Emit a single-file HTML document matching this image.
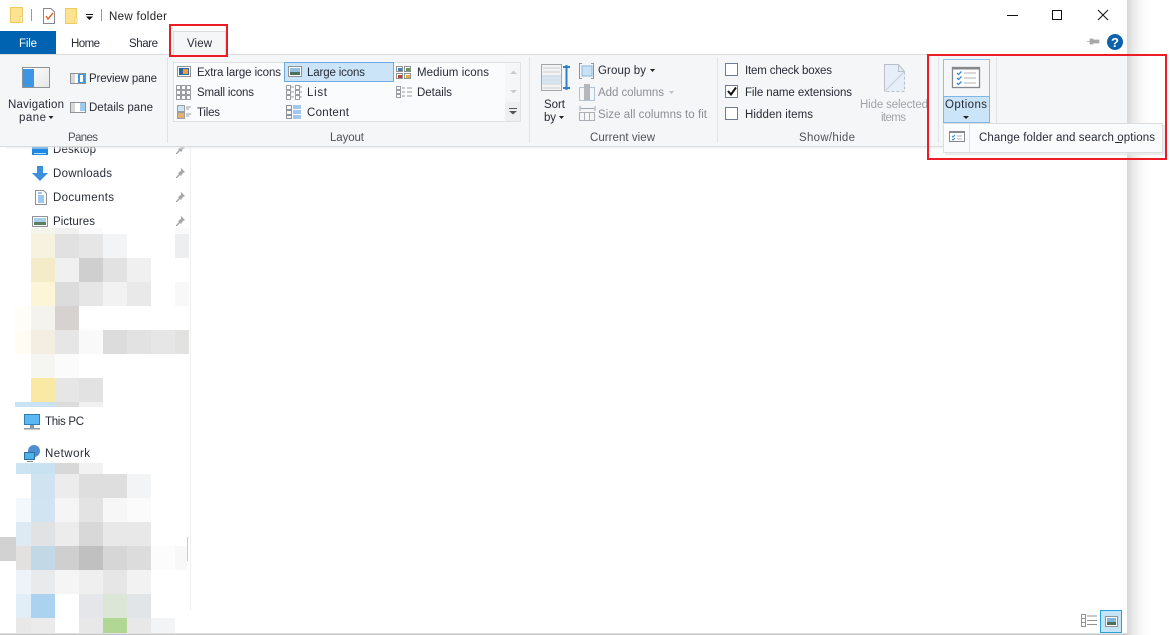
<!DOCTYPE html>
<html><head><meta charset="utf-8"><title>New folder</title>
<style>
html,body{margin:0;padding:0;background:#fff;width:1170px;height:635px;overflow:hidden}
svg{display:block}
text{font-family:"Liberation Sans",sans-serif;font-size:11.5px;fill:#262b36}
.g{fill:#8b8f94}
.h{fill:#a0a4a8}
</style></head><body>
<svg width="1170" height="635" viewBox="0 0 1170 635" xmlns="http://www.w3.org/2000/svg">
<defs>
<linearGradient id="sh" x1="0" x2="1" y1="0" y2="0"><stop offset="0" stop-color="#d6d6d6"/><stop offset=".25" stop-color="#e9e9e9"/><stop offset=".6" stop-color="#f8f8f8"/><stop offset="1" stop-color="#fff"/></linearGradient>
<linearGradient id="nv" x1="0" x2="1" y1="0" y2="1"><stop offset="0" stop-color="#fff"/><stop offset="1" stop-color="#e6e6e6"/></linearGradient>
</defs>
<rect width="1170" height="635" fill="#fff"/>
<rect x="1127" y="0" width="24" height="635" fill="url(#sh)"/>

<!-- sidebar -->
<rect x="190" y="147" width="1" height="463" fill="#f0f0f0"/>
<rect x="32" y="143" width="16" height="12" fill="#1e88e5"/><rect x="34" y="153" width="12" height="1" fill="#bfe0fa"/>
<text x="53" y="153" textLength="43">Desktop</text>
<path d="M37 166h6v7h5l-8 8-8-8h5z" fill="#3b8fdc"/>
<text x="53" y="177" textLength="59">Downloads</text>
<path d="M35.500 190.500h8l3 3v11h-11z" fill="#fff" stroke="#8d9297"/><path d="M38 193h4M38 196h6M38 198h6M38 200h6M38 202h6" stroke="#3e8fdc"/>
<text x="53" y="201" textLength="61">Documents</text>
<rect x="32.500" y="216.500" width="15" height="10" fill="#fff" stroke="#8f9398"/><rect x="34" y="218" width="12" height="4" fill="#a8cfe8"/><rect x="34" y="222" width="12" height="3" fill="#5c7f64"/>
<text x="53" y="225" textLength="42">Pictures</text>
<g fill="#a5a8ab">
<path d="M181 144l4 4-2 1-2 3-1-1-3 3-1 0 0-1 3-3-1-1 3-2z"/>
<path d="M181 168l4 4-2 1-2 3-1-1-3 3-1 0 0-1 3-3-1-1 3-2z"/>
<path d="M181 192l4 4-2 1-2 3-1-1-3 3-1 0 0-1 3-3-1-1 3-2z"/>
<path d="M181 216l4 4-2 1-2 3-1-1-3 3-1 0 0-1 3-3-1-1 3-2z"/>
</g>
<!-- pixelated upper -->
<g>
<rect x="31" y="228" width="24" height="6" fill="#f6f5ec"/><rect x="55" y="228" width="24" height="6" fill="#f0f0f0"/><rect x="79" y="228" width="24" height="6" fill="#fafafa"/><rect x="175" y="228" width="14" height="6" fill="#fafafa"/>
<rect x="31" y="234" width="24" height="24" fill="#f7f1df"/><rect x="55" y="234" width="24" height="24" fill="#e2e1e1"/><rect x="79" y="234" width="24" height="24" fill="#e6e6e6"/><rect x="103" y="234" width="24" height="24" fill="#f3f4f6"/><rect x="175" y="234" width="14" height="24" fill="#edeef0"/>
<rect x="31" y="258" width="24" height="24" fill="#f4ebc8"/><rect x="55" y="258" width="24" height="24" fill="#f0f0f0"/><rect x="79" y="258" width="24" height="24" fill="#cfcfcf"/><rect x="103" y="258" width="24" height="24" fill="#e2e2e2"/><rect x="127" y="258" width="24" height="24" fill="#f0f0f0"/>
<rect x="31" y="282" width="24" height="24" fill="#fdf5d8"/><rect x="55" y="282" width="24" height="24" fill="#dcdcdc"/><rect x="79" y="282" width="24" height="24" fill="#e6e6e6"/><rect x="103" y="282" width="24" height="24" fill="#f2f2f2"/><rect x="127" y="282" width="24" height="24" fill="#e9e9e9"/><rect x="175" y="282" width="14" height="24" fill="#f8f8f8"/>
<rect x="15" y="306" width="16" height="24" fill="#fffdf7"/><rect x="31" y="306" width="24" height="24" fill="#f4f3ee"/><rect x="55" y="306" width="24" height="24" fill="#d5d2d0"/>
<rect x="15" y="330" width="16" height="24" fill="#fffcf3"/><rect x="31" y="330" width="24" height="24" fill="#f3eee1"/><rect x="55" y="330" width="24" height="24" fill="#e6e6e6"/><rect x="79" y="330" width="24" height="24" fill="#f9f9f9"/><rect x="103" y="330" width="24" height="24" fill="#dcdcdc"/><rect x="127" y="330" width="24" height="24" fill="#e2e2e2"/><rect x="151" y="330" width="24" height="24" fill="#e6e6e6"/><rect x="175" y="330" width="14" height="24" fill="#e2e2e0"/>
<rect x="31" y="354" width="24" height="24" fill="#f5f5f2"/><rect x="55" y="354" width="24" height="24" fill="#fafbfa"/>
<rect x="31" y="378" width="24" height="24" fill="#fae8a5"/><rect x="55" y="378" width="24" height="24" fill="#e6e6e6"/><rect x="79" y="378" width="24" height="24" fill="#e2e2e2"/>
<rect x="15" y="402" width="40" height="5" fill="#c9e2f5"/><rect x="55" y="402" width="24" height="5" fill="#dcdcdc"/><rect x="79" y="402" width="24" height="5" fill="#f0f0f0"/>
</g>
<!-- This PC / Network -->
<rect x="24.500" y="414.500" width="15" height="10" fill="#5cb8f2" stroke="#2f7fb5"/><rect x="30" y="425" width="4" height="3" fill="#8a9aa5"/><rect x="24" y="428" width="16" height="1.500" fill="#8f9aa3"/>
<text x="45" y="425" textLength="39">This PC</text>
<circle cx="34" cy="451" r="6" fill="#4f8fd0"/><rect x="24.500" y="452.500" width="10" height="7" fill="#4fb0ea" stroke="#2d6f9f"/><rect x="27" y="461" width="6" height="1" fill="#7d8b96"/>
<text x="45" y="457" textLength="45">Network</text>
<!-- pixelated lower -->
<g>
<rect x="16" y="463" width="15" height="11" fill="#cde4f3"/><rect x="31" y="463" width="24" height="11" fill="#c9e2f1"/><rect x="55" y="463" width="24" height="11" fill="#d8d8d8"/><rect x="79" y="463" width="24" height="11" fill="#f2f2f2"/>
<rect x="31" y="474" width="24" height="24" fill="#cfe3f1"/><rect x="55" y="474" width="24" height="24" fill="#ececec"/><rect x="79" y="474" width="48" height="24" fill="#dedede"/><rect x="127" y="474" width="24" height="24" fill="#f3f4f6"/>
<rect x="16" y="498" width="15" height="24" fill="#f2f8fb"/><rect x="31" y="498" width="24" height="24" fill="#d0e4f2"/><rect x="55" y="498" width="24" height="24" fill="#f5f5f5"/><rect x="79" y="498" width="24" height="24" fill="#e3e3e3"/><rect x="103" y="498" width="24" height="24" fill="#f7f7f7"/><rect x="127" y="498" width="24" height="24" fill="#fbfbfb"/>
<rect x="16" y="522" width="15" height="24" fill="#dde9f3"/><rect x="31" y="522" width="24" height="24" fill="#e0e2e4"/><rect x="55" y="522" width="24" height="24" fill="#ececec"/><rect x="79" y="522" width="24" height="24" fill="#d8d8d8"/><rect x="103" y="522" width="48" height="24" fill="#e8e8e8"/>
<rect x="0" y="537" width="16" height="24" fill="#d2d2d2"/><rect x="187" y="537" width="1" height="24" fill="#cccccc"/>
<rect x="16" y="546" width="15" height="24" fill="#e2e1e0"/><rect x="31" y="546" width="24" height="24" fill="#c2d8e6"/><rect x="55" y="546" width="24" height="24" fill="#cfcfcf"/><rect x="79" y="546" width="24" height="24" fill="#c0c0c1"/><rect x="103" y="546" width="24" height="24" fill="#d6d6d6"/><rect x="127" y="546" width="24" height="24" fill="#dcdcdc"/><rect x="151" y="546" width="24" height="24" fill="#fcfcfc"/><rect x="175" y="546" width="12" height="24" fill="#f8f8f8"/>
<rect x="16" y="570" width="15" height="24" fill="#edf3f9"/><rect x="31" y="570" width="24" height="24" fill="#e9eaeb"/><rect x="55" y="570" width="24" height="24" fill="#f5f5f5"/><rect x="79" y="570" width="24" height="24" fill="#efefef"/><rect x="103" y="570" width="24" height="24" fill="#e6e6e6"/><rect x="127" y="570" width="24" height="24" fill="#f2f2f2"/>
<rect x="16" y="594" width="15" height="24" fill="#e1eef8"/><rect x="31" y="594" width="24" height="24" fill="#abd2ee"/><rect x="79" y="594" width="24" height="24" fill="#e4e6ea"/><rect x="103" y="594" width="24" height="24" fill="#dbe6d7"/><rect x="127" y="594" width="24" height="24" fill="#e1e5e8"/>
<rect x="16" y="618" width="15" height="15" fill="#e8e8e8"/><rect x="31" y="618" width="24" height="15" fill="#ebebeb"/><rect x="79" y="618" width="24" height="15" fill="#e8e8e8"/><rect x="103" y="618" width="24" height="15" fill="#b1d794"/><rect x="127" y="618" width="24" height="15" fill="#e8e8e8"/><rect x="151" y="618" width="24" height="15" fill="#f3f4f6"/>
</g>

<!-- bottom bar -->
<rect x="0" y="633.500" width="1127" height="1.500" fill="#c4c4c4"/>
<g fill="none" stroke="#8f9398"><rect x="1081.500" y="614.500" width="4" height="4"/><rect x="1081.500" y="618.500" width="4" height="4"/><rect x="1081.500" y="622.500" width="4" height="4"/></g>
<path d="M1087 616h10M1087 620.500h10M1087 624.500h10" stroke="#8f9398" stroke-width="1"/>
<rect x="1100.500" y="610.500" width="21" height="22" fill="#c6e4f8" stroke="#26a0da"/>
<rect x="1105.500" y="616.500" width="12" height="10" fill="#fff" stroke="#8f9398"/><rect x="1107" y="618" width="9" height="4" fill="#7fb6de"/><rect x="1107" y="622" width="9" height="3" fill="#4f6f5a"/>

<!-- title bar -->
<rect x="10.500" y="7.500" width="12" height="15" fill="#fde38f" stroke="#eccc63"/><rect x="20" y="16.500" width="2.500" height="6" fill="#fff3c8" stroke="#eccc63" stroke-width=".7"/>
<rect x="31" y="9" width="1" height="12" fill="#9a9a9a"/>
<path d="M43.500 8.500h7.500l3.500 3.500v11.500h-11z" fill="#fff" stroke="#85888c"/>
<path d="M46 16l2 3 5-6" fill="none" stroke="#e8632a" stroke-width="1.500"/>
<rect x="65.500" y="8.500" width="11" height="15" fill="#fde38f" stroke="#eccc63"/><rect x="75" y="17.500" width="2" height="6" fill="#fff3c8" stroke="#eccc63" stroke-width=".7"/>
<rect x="86" y="14" width="7" height="1" fill="#111"/><path d="M86 16.500h7l-3.500 3.500z" fill="#111"/>
<rect x="101" y="9" width="1" height="12" fill="#9a9a9a"/>
<text x="109" y="20" textLength="58" style="fill:#222">New folder</text>
<rect x="1007" y="15" width="11" height="1" fill="#111"/>
<rect x="1052.500" y="10.500" width="9" height="9" fill="none" stroke="#111"/>
<path d="M1098 10l10 10M1108 10l-10 10" stroke="#111" stroke-width="1"/>
<path d="M1087 41.500h3M1090 39h3v5h-3zM1093 40h6v3h-6z" fill="#a8a8a8" stroke="#a8a8a8" stroke-width=".7"/>
<circle cx="1115" cy="42" r="8" fill="#0d62ab"/>
<text x="1111" y="47" textLength="8" style="font-size:13px;font-weight:bold;fill:#fff">?</text>

<!-- tabs -->
<rect x="0" y="31" width="56" height="23" fill="#0063b1"/>
<text x="19" y="47" textLength="18" style="fill:#fff">File</text>
<text x="71" y="47" textLength="29">Home</text>
<text x="129" y="47" textLength="29">Share</text>

<!-- ribbon -->
<rect x="6" y="147" width="1121" height="2" fill="#ececec" opacity=".5"/>
<rect x="0" y="54" width="1127" height="93" fill="#f5f6f7"/>
<rect x="0" y="54" width="1127" height="1" fill="#dadbdc"/>
<rect x="0" y="146" width="1127" height="1" fill="#dadbdc"/>
<rect x="173.500" y="31.500" width="52" height="24" fill="#f5f6f7" stroke="#dadbdc"/><rect x="174" y="54" width="51" height="2" fill="#f5f6f7"/>
<text x="187" y="47" textLength="25">View</text>
<rect x="167" y="57" width="1" height="86" fill="#e2e3e4"/>
<rect x="529" y="57" width="1" height="86" fill="#e2e3e4"/>
<rect x="717" y="57" width="1" height="86" fill="#e2e3e4"/>
<rect x="938" y="57" width="1" height="86" fill="#e2e3e4"/>
<rect x="996" y="57" width="1" height="86" fill="#e2e3e4"/>

<!-- panes -->
<rect x="22.500" y="67.500" width="27" height="20" fill="url(#nv)" stroke="#8f9398"/>
<rect x="23" y="69" width="11" height="18" fill="#3d96e4"/>
<text x="8" y="108" textLength="56">Navigation</text>
<text x="19" y="121" textLength="27">pane</text>
<path d="M48.500 116h5l-2.500 3z" fill="#222"/>
<rect x="70.500" y="73.500" width="15" height="10" fill="#fff" stroke="#8f9398"/><rect x="71" y="74" width="4" height="9" fill="#d8d8d8"/><rect x="78" y="74" width="7" height="9" fill="#3f97e2"/><rect x="80" y="75" width="3" height="7" fill="#fff"/>
<text x="89" y="82" textLength="68">Preview pane</text>
<rect x="70.500" y="102.500" width="15" height="10" fill="#fff" stroke="#8f9398"/><rect x="71" y="103" width="4" height="9" fill="#d8d8d8"/><path d="M80 104h5M80 106h5M80 108h5M80 110h5" stroke="#3f97e2"/>
<text x="89" y="111" textLength="64">Details pane</text>
<text x="68" y="141" textLength="30" style="fill:#4f5358">Panes</text>

<!-- layout gallery -->
<rect x="173.500" y="62.500" width="347" height="59" fill="#fafbfd" stroke="#e0e1e3"/>
<rect x="505" y="63" width="15" height="58" fill="#f5f6f7"/>
<rect x="505" y="102" width="15" height="19" fill="#eeeff1"/>
<path d="M510 74h7l-3.500-3.500z" fill="#c9cbcf"/><path d="M510 90h7l-3.500 3.500z" fill="#c9cbcf"/>
<rect x="509" y="108" width="8" height="1" fill="#555"/><path d="M509 111h8l-4 3.500z" fill="#555"/>
<rect x="284.500" y="62.500" width="109" height="19" fill="#cce4f7" stroke="#6fa9e2"/>
<!-- gallery icons -->
<rect x="177.500" y="66.500" width="13" height="10" fill="#fff" stroke="#8f9398"/><rect x="179" y="68" width="10" height="7" fill="#30649a"/><rect x="183" y="69" width="5" height="5" fill="#e8a23a"/>
<g fill="#fff" stroke="#9a9da1"><rect x="176.500" y="85.500" width="4" height="4"/><rect x="181.500" y="85.500" width="4" height="4"/><rect x="186.500" y="85.500" width="4" height="4"/><rect x="176.500" y="90.500" width="4" height="4"/><rect x="181.500" y="90.500" width="4" height="4"/><rect x="186.500" y="90.500" width="4" height="4"/><rect x="176.500" y="95.500" width="4" height="4"/><rect x="181.500" y="95.500" width="4" height="4"/><rect x="186.500" y="95.500" width="4" height="4"/></g>
<rect x="177.500" y="105.500" width="7" height="6" fill="#cfe4f5" stroke="#9a9da1"/><rect x="177.500" y="112.500" width="7" height="6" fill="#e0b070" stroke="#9a9da1"/><path d="M186 107h5M186 109h3M186 114h5M186 116h3" stroke="#9a9da1"/>
<text x="197" y="76" textLength="84">Extra large icons</text>
<text x="197" y="96" textLength="57">Small icons</text>
<text x="197" y="116" textLength="23">Tiles</text>
<rect x="288.500" y="66.500" width="13" height="10" fill="#fff" stroke="#8f9398"/><rect x="290" y="68" width="10" height="4" fill="#8fc0e0"/><rect x="290" y="72" width="10" height="3" fill="#4f6f5a"/>
<g fill="#fff" stroke="#9a9da1"><rect x="286.500" y="85.500" width="4" height="4"/><rect x="286.500" y="90.500" width="4" height="4"/><rect x="286.500" y="95.500" width="4" height="4"/><rect x="295.500" y="85.500" width="4" height="4"/><rect x="295.500" y="90.500" width="4" height="4"/><rect x="295.500" y="95.500" width="4" height="4"/></g>
<path d="M291 87h3M291 92h3M291 97h3M300 87h2M300 92h2M300 97h2" stroke="#9a9da1"/>
<g fill="#fff" stroke="#8f9398"><rect x="286.500" y="105.500" width="5" height="4"/><rect x="286.500" y="110.500" width="5" height="4"/><rect x="286.500" y="115.500" width="5" height="3"/></g>
<path d="M293 106h8M293 108h8M293 111h8M293 113h8M293 116h8M293 118h8" stroke="#4a90e0"/>
<text x="307" y="76" textLength="58">Large icons</text>
<text x="307" y="96" textLength="20">List</text>
<text x="307" y="116" textLength="42">Content</text>
<g fill="#fff" stroke="#8f9398"><rect x="396.500" y="66.500" width="6" height="5"/><rect x="404.500" y="66.500" width="6" height="5"/><rect x="396.500" y="73.500" width="6" height="5"/><rect x="404.500" y="73.500" width="6" height="5"/></g>
<rect x="398" y="75" width="4" height="3" fill="#c8402a"/><rect x="406" y="75" width="4" height="3" fill="#e0b040"/><rect x="398" y="68" width="4" height="3" fill="#4a80b0"/><rect x="406" y="68" width="4" height="3" fill="#5a9a5a"/>
<g fill="#fff" stroke="#9a9da1"><rect x="396.500" y="86.500" width="4" height="3"/><rect x="396.500" y="90.500" width="4" height="3"/><rect x="396.500" y="94.500" width="4" height="3"/></g>
<path d="M402 88h3M407 88h5M402 92h3M407 92h5M402 96h3M407 96h5" stroke="#9a9da1"/>
<text x="417" y="76" textLength="72">Medium icons</text>
<text x="417" y="96" textLength="35">Details</text>
<text x="330" y="141" textLength="34" style="fill:#4f5358">Layout</text>

<!-- current view -->
<rect x="541.500" y="64.500" width="20" height="26" fill="#f3f3f3" stroke="#a3a6a9"/>
<path d="M543 68h17M543 72h17M543 76h17M543 80h17M543 84h17M543 88h17" stroke="#c9ced2"/><rect x="542" y="75" width="19" height="9" fill="#cfe0ec" opacity=".7"/>
<path d="M566.500 65v25" stroke="#2f80c8" stroke-width="2"/><path d="M563 67h7M563 88h7" stroke="#2f80c8" stroke-width="2"/>
<text x="544" y="108" textLength="21">Sort</text>
<text x="544" y="121" textLength="12">by</text>
<path d="M559 116h5l-2.500 3z" fill="#222"/>
<rect x="582" y="66" width="10" height="10" fill="#c8e3f8" stroke="#8ab6d8"/>
<path d="M582 63.500h-2.500v15h2.500M591 63.500h2.500v15h-2.500" fill="none" stroke="#8f9398"/>
<text x="598" y="74" textLength="48">Group by</text>
<path d="M650 69h5l-2.500 3z" fill="#222"/>
<rect x="579.500" y="87.500" width="15" height="13" fill="none" stroke="#b0c4d6"/><rect x="584" y="84" width="6" height="16" fill="#b4b8bc"/>
<text x="598" y="96" textLength="66" class="g">Add columns</text>
<path d="M669 91h5l-2.500 3z" fill="#c0c2c4"/>
<path d="M580 106v5M595 106v5M581 108.500h13" stroke="#9aa5b0"/>
<rect x="579.500" y="112.500" width="15" height="8" fill="none" stroke="#aab0b6"/><path d="M584.500 113v7M589.500 113v7" stroke="#aab0b6"/>
<text x="598" y="118" textLength="109" class="g">Size all columns to fit</text>
<text x="590" y="141" textLength="65" style="fill:#4f5358">Current view</text>

<!-- show/hide -->
<g fill="#fff" stroke="#6d7b95"><rect x="725.500" y="63.500" width="12" height="12"/><rect x="725.500" y="85.500" width="12" height="12"/><rect x="725.500" y="107.500" width="12" height="12"/></g>
<path d="M728 91l3 3.500 5-7" fill="none" stroke="#111" stroke-width="2"/>
<text x="745" y="74" textLength="87">Item check boxes</text>
<text x="745" y="96" textLength="107">File name extensions</text>
<text x="745" y="118" textLength="68">Hidden items</text>
<path d="M884.500 64.500h14l6 7v20h-20z" fill="#e6eef9"/>
<path d="M884.500 91.500v-27h14l6 7M898.500 64.500v7h6" fill="none" stroke="#b8c0c8"/>
<path d="M904.500 71.500v20h-20" fill="none" stroke="#b8c0c8" stroke-dasharray="3 2"/>
<path d="M885 91l19-19" stroke="#c8ced6"/>
<text x="860" y="108" textLength="68" class="h">Hide selected</text>
<text x="881" y="121" textLength="25" class="h">items</text>
<text x="799" y="141" textLength="56" style="fill:#4f5358">Show/hide</text>

<!-- options -->
<rect x="943.500" y="59.500" width="46" height="37" fill="#f5f6f7" stroke="#90c0ec"/>
<rect x="943.500" y="96.500" width="46" height="26" fill="#cce4f7" stroke="#7fb6e6"/>
<rect x="952.500" y="67.500" width="27" height="20" fill="#fff" stroke="#85888c" stroke-width="1.300"/>
<rect x="953" y="67.500" width="26" height="2" fill="#85888c"/>
<path d="M957 73l1.500 1.500 3-3M957 78l1.500 1.500 3-3M957 83l1.500 1.500 3-3" fill="none" stroke="#3a88d8" stroke-width="1.300"/>
<path d="M964 73h12M964 78h12M964 83h12" stroke="#b0b2b4"/>
<text x="945" y="108" textLength="42">Options</text>
<path d="M963 116h6l-3 3z" fill="#222"/>

<!-- menu -->
<rect x="945" y="125" width="220" height="30" fill="#e4e4e4" opacity=".7"/>
<rect x="943.500" y="123.500" width="219" height="29" fill="#fafbfc" stroke="#dcdddf"/>
<rect x="969" y="124" width="1" height="28" fill="#e2e3e4"/>
<rect x="949.500" y="131.500" width="15" height="10" fill="#fff" stroke="#85888c"/><rect x="950" y="131.500" width="14" height="1.500" fill="#85888c"/>
<path d="M952 136l1 1 2-2M952 139l1 1 2-2" fill="none" stroke="#3a88d8"/><path d="M957 136h5M957 139h5" stroke="#b0b2b4"/>
<text x="979" y="141" textLength="176">Change folder and search options</text>
<rect x="1115" y="142" width="7" height="1" fill="#262b36"/>

<!-- red annotations -->
<rect x="170" y="25" width="57" height="31" fill="none" stroke="#ed1c24" stroke-width="2"/>
<rect x="928" y="55" width="238" height="104" fill="none" stroke="#ed1c24" stroke-width="2"/>
</svg>
</body></html>
